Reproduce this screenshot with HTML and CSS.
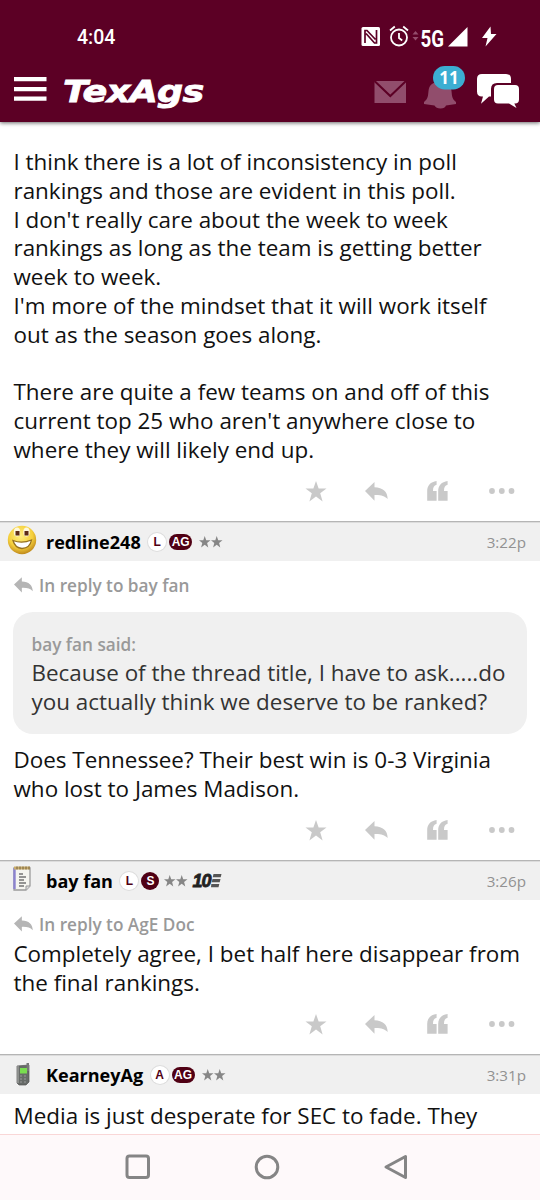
FILE: index.html
```html
<!DOCTYPE html>
<html lang="en">
<head>
<meta charset="utf-8">
<title>TexAgs</title>
<link rel="stylesheet" href="styles.css">
</head>
<body>
<svg class="defs" width="0" height="0">
  <symbol id="star" viewBox="0 0 20 20"><path d="M10 0l2.500 7.200h7.500l-6 4.500 2.300 7.800-6.300-4.700-6.300 4.700 2.300-7.800-6-4.500h7.500z"/></symbol>
  <symbol id="reply" viewBox="0 0 23 19"><path d="M0 9L9.500 0v5.200C18 5.500 22.500 9.500 22.700 17 19.500 13.800 16 12.800 9.500 13v5.700z"/></symbol>
  <symbol id="quote" viewBox="0 0 21 20"><path d="M9.600 0v3.800C7 4.500 6 6.500 6 10h3.600v9.700H.2V10C.2 4.500 3.500.8 9.600 0zM20.600 0v3.800C18 4.500 17 6.500 17 10h3.600v9.700h-9.400V10C11.200 4.500 14.500.8 20.600 0z"/></symbol>
  <symbol id="dots" viewBox="0 0 26 6"><circle cx="3" cy="3" r="2.900"/><circle cx="12.800" cy="3" r="2.900"/><circle cx="22.500" cy="3" r="2.900"/></symbol>
  <symbol id="pair" viewBox="0 0 24 12"><path d="M5.700 0l1.500 4.200h4.300L8.100 6.900l1.200 4.700-3.600-2.800-3.600 2.800 1.200-4.700L0 4.200h4.300zM17.700 0l1.500 4.200h4.300l-3.400 2.700 1.200 4.700-3.600-2.800-3.600 2.800 1.200-4.700L12 4.200h4.300z"/></symbol>
</svg>
<header class="top">
  <div class="status">
    <span class="clock">4:04</span>
    <svg class="status-icons" width="140" height="26" viewBox="360 24 140 26">
      <rect x="361.500" y="27" width="18.500" height="19" rx="1.500" fill="#fff"/>
      <path d="M365 43V30.500h2l8.500 9M376.500 30v13h-2L366 33.500" fill="none" stroke="#5c0025" stroke-width="1.700"/>
      <circle cx="399" cy="37.500" r="8" fill="none" stroke="#fff" stroke-width="1.800"/>
      <path d="M390 30.500l4.800-4M408 30.500l-4.800-4M399 33v5l3.200 2.500" fill="none" stroke="#fff" stroke-width="1.800"/>
      <path d="M412.500 34.500l3-3.500 3 3.500zM412.500 37l3 3.500 3-3.500z" fill="#944c6c"/>
      <path d="M467.500 27v19.500H448zM490.500 26.500L482 38h5.500l-2 8.500L496.500 34H491z" fill="#fff"/>
      <text x="420.500" y="46.500" class="net" textLength="23.500" lengthAdjust="spacingAndGlyphs">5G</text>
    </svg>
  </div>
  <div class="bar">
    <svg class="menu" width="34" height="26" viewBox="0 0 34 26"><path d="M1 1h32.500v4.300H1zM1 11h32.500v4.300H1zM1 20.500h32.500v4.300H1z" fill="#fff"/></svg>
    <div class="logo">TexAgs</div>
    <svg class="actions" width="150" height="46" viewBox="373 64 150 46">
      <path d="M374.500 81h31.500v22H374.500z" fill="#914d6c"/>
      <path d="M374.500 81l15.800 15L406 81" fill="none" stroke="#5c0025" stroke-width="2"/>
      <path d="M424 104v-2c4-3 4-6 4.500-11 .6-6 4-9 11.500-9s11 3 11.500 9c.5 5 .5 8 4.500 11v2l-10 1.500q-1 3-5.500 3t-6-3z" fill="#914d6c"/>
      <rect x="433" y="66" width="32" height="23.500" rx="11.700" fill="#3caed2"/>
      <text x="449" y="83.500" class="count">11</text>
      <path d="M482 74h24q5 0 5 5v4h-14q-6 0-6 6v7.500h-2l-8 7.300 2-7.300h-1q-5 0-5-5V79q0-5 5-5z" fill="#fff"/>
      <path d="M498 85h17q4 0 4 4v10.500q0 4-4 4h-.7l2.200 4.500-7.500-4.500H498q-4 0-4-4V89q0-4 4-4z" fill="#fff"/>
    </svg>
  </div>
</header>
<main class="thread">
  <section class="post first">
    <p class="text">I think there is a lot of inconsistency in poll<br>rankings and those are evident in this poll.<br>I don't really care about the week to week<br>rankings as long as the team is getting better<br>week to week.<br>I'm more of the mindset that it will work itself<br>out as the season goes along.<br><br>There are quite a few teams on and off of this<br>current top 25 who aren't anywhere close to<br>where they will likely end up.</p>
    <div class="tools"><svg class="t-star"><use href="#star"/></svg><svg class="t-reply"><use href="#reply"/></svg><svg class="t-quote"><use href="#quote"/></svg><svg class="t-dots"><use href="#dots"/></svg></div>
  </section>
  <section class="post">
    <div class="head">
      <svg class="avatar" viewBox="0 0 32 32">
        <defs><radialGradient id="face" cx=".45" cy=".35" r=".65"><stop offset="0" stop-color="#ffef80"/><stop offset=".65" stop-color="#f5cf3c"/><stop offset="1" stop-color="#c08a1c"/></radialGradient></defs>
        <circle cx="16" cy="16" r="14.200" fill="url(#face)"/>
        <ellipse cx="11" cy="8" rx="3.200" ry="4.500" fill="#fff8dc"/><ellipse cx="20.500" cy="8" rx="3.200" ry="4.500" fill="#fff8dc"/>
        <path d="M9.500 7h4v4.500h-4zM18.500 7h4v4.500h-4z" fill="#5c2b15"/>
        <path d="M7 16.500Q16 20 25.500 16q-1.500 8-9.500 8.500-7-.5-9-8z" fill="#fff" stroke="#95701f" stroke-width="1.300"/>
      </svg>
      <b class="name">redline248</b>
      <span class="badge">L</span><span class="badge pill">AG</span><svg class="rank"><use href="#pair"/></svg>
      <time>3:22p</time>
    </div>
    <div class="inreply"><svg class="mini"><use href="#reply"/></svg><span>In reply to bay fan</span></div>
    <blockquote class="quote"><cite>bay fan said:</cite>Because of the thread title, I have to ask.....do<br>you actually think we deserve to be ranked?</blockquote>
    <p class="text">Does Tennessee? Their best win is 0-3 Virginia<br>who lost to James Madison.</p>
    <div class="tools"><svg class="t-star"><use href="#star"/></svg><svg class="t-reply"><use href="#reply"/></svg><svg class="t-quote"><use href="#quote"/></svg><svg class="t-dots"><use href="#dots"/></svg></div>
  </section>
  <section class="post second">
    <div class="head">
      <svg class="avatar" viewBox="0 0 32 32">
        <path d="M8 5h16v18l-4 4H8z" fill="#f5f5ef" stroke="#9b9b9b" stroke-width="1.300"/>
        <path d="M8.500 5v21" stroke="#8c83cf" stroke-width="2.400"/>
        <path d="M8 5h16" stroke="#c9ad6c" stroke-width="3"/>
        <path d="M11 3.500v3M14 3.500v3M17 3.500v3M20 3.500v3M23 3.500v3" stroke="#75603c" stroke-width="1"/>
        <path d="M13 11h4M13 14h7M13 17h5M13 20h7M13 23h5" stroke="#747474" stroke-width="1.500"/>
        <path d="M20 27v-4h4" fill="#ddd" stroke="#999"/>
      </svg>
      <b class="name">bay fan</b>
      <span class="badge">L</span><span class="badge dark">S</span><svg class="rank near"><use href="#pair"/></svg>
      <span class="ten">10</span><svg class="ten-bars" width="11" height="14" viewBox="0 0 11 14"><path d="M2.500 0h8l-.8 3.200h-8zM1.500 5h8l-.8 3.200h-8zM.3 10h8l-.8 3.200H0z" fill="#555"/></svg>
      <time>3:26p</time>
    </div>
    <div class="inreply tight"><svg class="mini"><use href="#reply"/></svg><span>In reply to AgE Doc</span></div>
    <p class="text">Completely agree, I bet half here disappear from<br>the final rankings.</p>
    <div class="tools"><svg class="t-star"><use href="#star"/></svg><svg class="t-reply"><use href="#reply"/></svg><svg class="t-quote"><use href="#quote"/></svg><svg class="t-dots"><use href="#dots"/></svg></div>
  </section>
  <section class="post">
    <div class="head">
      <svg class="avatar" viewBox="0 0 32 32">
        <path d="M11 9l12-1v17l-3 3h-7l-2-2z" fill="#676b68" stroke="#555" stroke-width=".7"/>
        <path d="M20.500 6h2.500v8h-2.500z" fill="#777"/>
        <path d="M12 9v17" stroke="#9a9d9a" stroke-width="1.500"/>
        <path d="M14 11h7v5.500h-7z" fill="#79dd4f"/>
        <path d="M14 19h2M18 19h2M14 22h2M18 22h2M14 25h2M18 25h2" stroke="#999" stroke-width="1.200"/>
      </svg>
      <b class="name">KearneyAg</b>
      <span class="badge">A</span><span class="badge pill">AG</span><svg class="rank"><use href="#pair"/></svg>
      <time>3:31p</time>
    </div>
    <p class="text last">Media is just desperate for SEC to fade. They</p>
  </section>
</main>
<nav class="nav">
  <svg width="26" height="26" viewBox="0 0 26 26"><rect x="2" y="2" width="21.500" height="21.500" rx="2.500"/></svg>
  <svg width="26" height="26" viewBox="0 0 26 26"><circle cx="13" cy="13" r="10.800"/></svg>
  <svg width="26" height="26" viewBox="0 0 26 26"><path d="M22.500 2.500v21L3 13z"/></svg>
</nav>
</body>
</html>
```
FILE: styles.css
```css
* { box-sizing: border-box; }
body {
  margin: 0;
  width: 540px;
  height: 1200px;
  overflow: hidden;
  display: flex;
  flex-direction: column;
  background: #fff;
  color: #111;
  font-family: "Open Sans", sans-serif;
}
.defs { display: none; }
.top {
  height: 122px;
  flex: none;
  background: #5c0025;
  box-shadow: 0 1px 4px rgba(0, 0, 0, .6);
  z-index: 1;
}
.status {
  height: 62px;
  padding: 24px 40px 0 77px;
  display: flex;
  justify-content: space-between;
}
.clock { font: 500 19.500px/27px Roboto, sans-serif; color: #fff; }
.net { font: bold 23px Roboto, sans-serif; fill: #fff; }
.bar {
  height: 60px;
  padding: 2px 17px 0 13px;
  display: flex;
}
.menu { margin-top: 12px; }
.logo {
  margin-left: 16px;
  flex: 1;
  color: #fff;
  font: italic bold 31px/55px "DejaVu Sans", sans-serif;
  transform: scaleX(1.18);
  transform-origin: left;
  letter-spacing: -.6px;
  -webkit-text-stroke: .8px #fff;
}
.actions { flex: none; }
.count { font: bold 17px "Open Sans", sans-serif; fill: #fff; text-anchor: middle; }
.thread { height: 1012px; flex: none; overflow: hidden; }
.post { height: 339px; }
.post.first { height: 399px; padding-top: 26px; }
.post.second { height: 194px; }
.text {
  margin: 0;
  padding-left: 13.500px;
  font-size: 22.430px;
  line-height: 28.800px;
  white-space: nowrap;
}
.last { padding-top: 8px; }
.tools {
  height: 20px;
  margin-top: 16.500px;
  padding-left: 305px;
  display: flex;
  align-items: center;
  fill: #c9c9c9;
}
.t-star { width: 22px; height: 21px; }
.t-reply { width: 23px; height: 19px; margin-left: 38px; }
.t-quote { width: 21px; height: 20px; margin-left: 39px; }
.t-dots { width: 26px; height: 6px; margin-left: 41px; }
.head {
  height: 40px;
  padding: 0 14px 0 6px;
  display: flex;
  align-items: center;
  background: #f0f0f0;
  border-top: 1px solid #b5b5b5;
  box-shadow: inset 0 1px #dcdcdc;
}
.avatar { width: 32px; height: 32px; margin: -3px 0 0 -.5px; }
.name { margin: 0 7.500px 0 8.500px; color: #000; font-size: 18.050px; }
.badge {
  width: 18px;
  height: 18px;
  margin-right: 3px;
  border-radius: 9px;
  background: #fff;
  box-shadow: 0 0 0 1px #ddd;
  color: #500014;
  font: bold 12px/18px "Liberation Sans", sans-serif;
  text-align: center;
}
.pill, .dark { background: #500014; color: #fff; box-shadow: none; }
.pill { width: 23px; height: 16px; line-height: 16px; }
.rank { width: 24px; height: 12px; margin-left: 4px; fill: #868686; }
.near { margin-left: 2px; }
.ten {
  width: 20px;
  margin-left: 4px;
  color: #222;
  font: italic bold 18px/20px "Liberation Sans", sans-serif;
  letter-spacing: -1px;
  -webkit-text-stroke: .8px #222;
}
.ten-bars { margin-left: -1px; }
time { margin-left: auto; color: #929292; font-size: 15.200px; }
.inreply {
  height: 51px;
  padding: 0 0 3px 14px;
  display: flex;
  align-items: center;
  gap: 6px;
  color: #999;
  font-size: 17.200px;
  font-weight: 600;
}
.tight { height: 40px; padding: 8px 0 0 14px; }
.mini { width: 19px; height: 16px; fill: #b5b5b5; }
.quote {
  height: 122px;
  margin: 0 13px 12px 13px;
  padding: 19px 18.500px;
  border-radius: 20px;
  background: #f0f0f0;
  color: #333;
  font-size: 22.430px;
  line-height: 28.800px;
  white-space: nowrap;
}
.quote cite {
  display: block;
  height: 28px;
  color: #999;
  font-size: 17.200px;
  font-style: normal;
  font-weight: 600;
  line-height: 27px;
}
.nav {
  height: 66px;
  padding: 19px 0 0 125px;
  display: flex;
  gap: 103px;
  background: #fef9fa;
  border-top: 1px solid #f9d7d7;
  fill: none;
  stroke: #858585;
  stroke-width: 3px;
  stroke-linejoin: round;
}
```
